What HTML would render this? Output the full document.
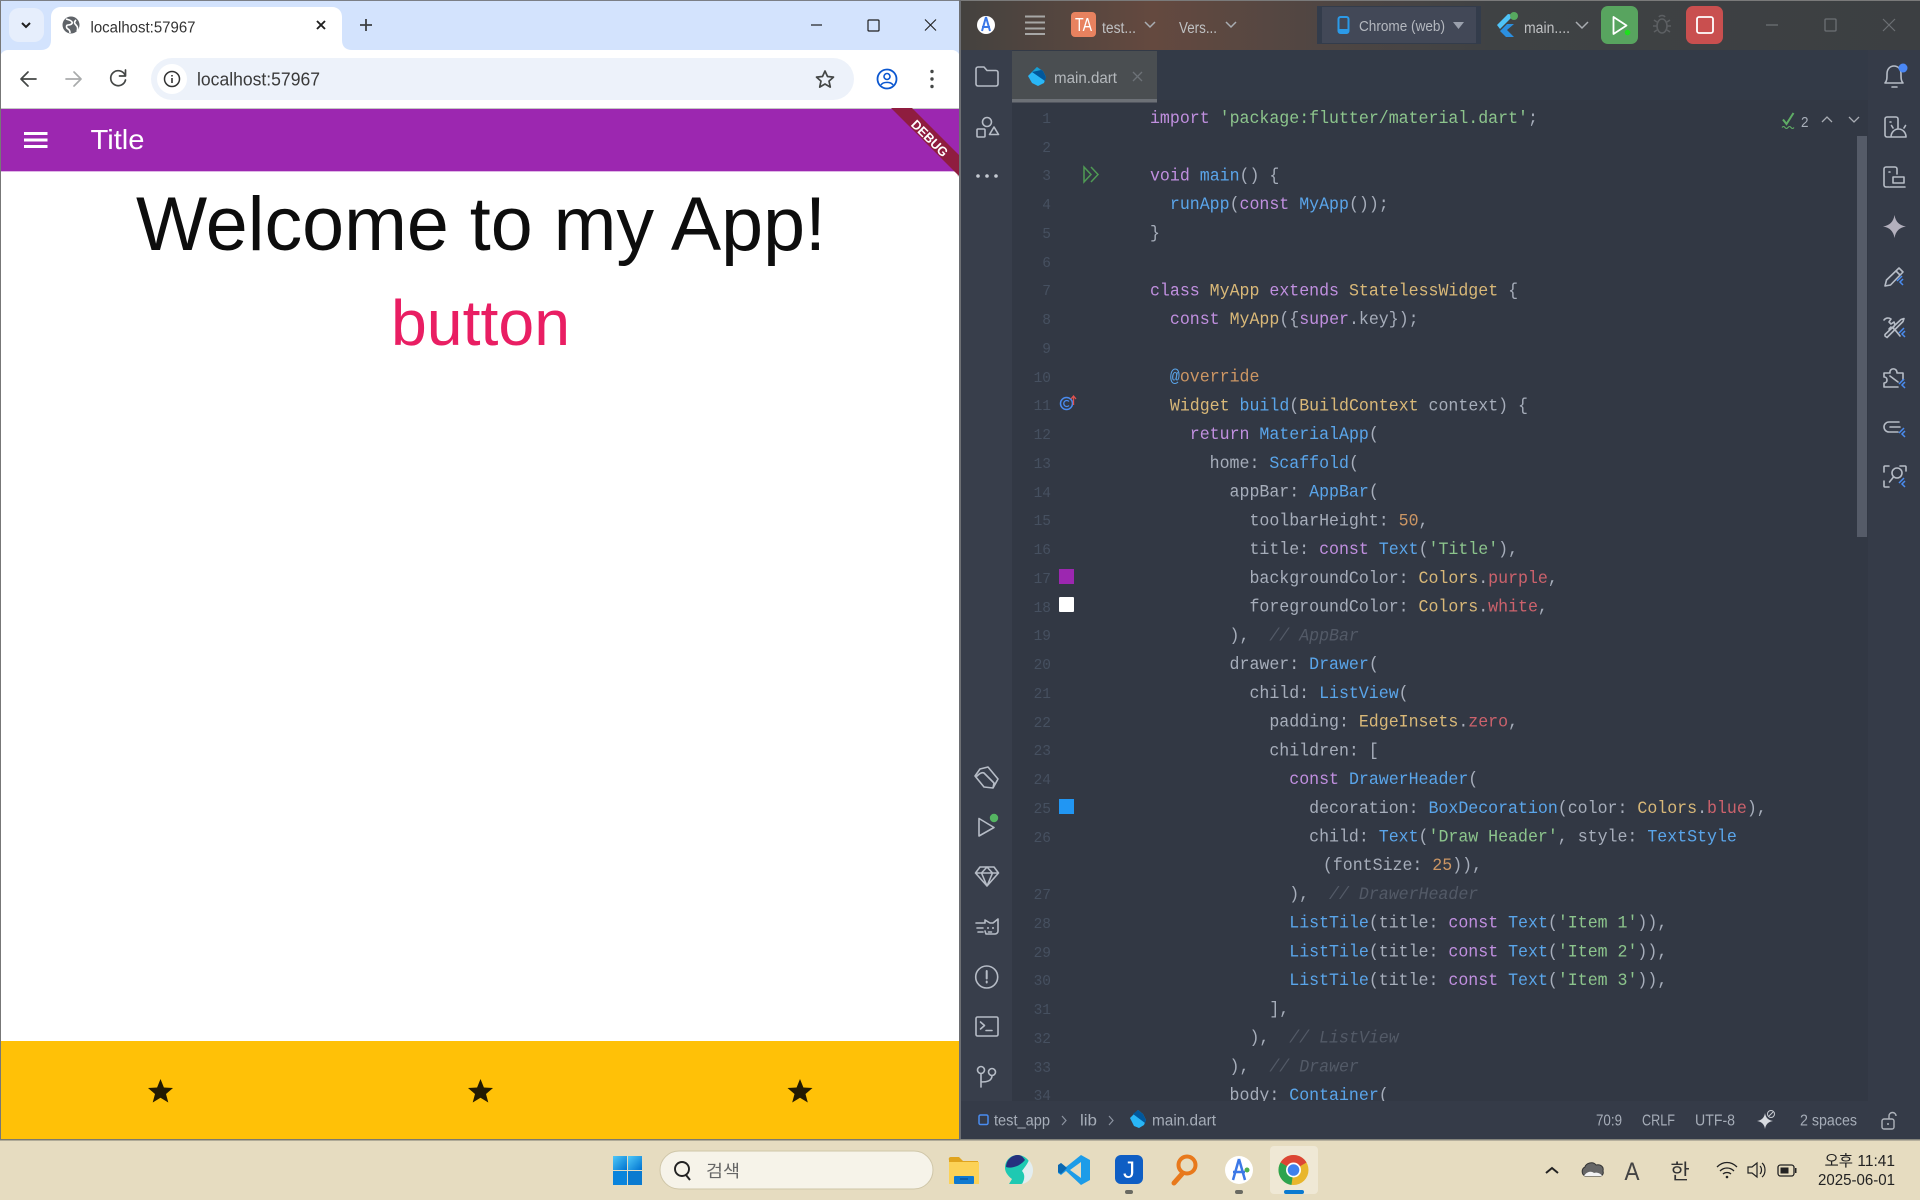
<!DOCTYPE html>
<html><head><meta charset="utf-8"><title>Screen</title>
<style>
html,body{margin:0;padding:0;background:#333a47;width:1920px;height:1200px;overflow:hidden}
svg{display:block;position:absolute;left:0;top:0}
text{font-family:"Liberation Sans","Noto Sans CJK KR",sans-serif;white-space:pre}
.code text{font-family:"Liberation Mono",monospace;font-size:17.47px;fill:#a6adba}
.k{fill:#c08fdf}.f{fill:#5aa5ea}.s{fill:#8cc48c}.y{fill:#d9b878}.r{fill:#cc626c}.n{fill:#cc9664}.c{fill:#535a67;font-style:italic}
.ln text{font-family:"Liberation Mono",monospace;font-size:14.5px;fill:#465060;text-anchor:end}
.ic{fill:none;stroke:#b6bcc6;stroke-width:1.6;stroke-linecap:round;stroke-linejoin:round}
.st{font-size:15.5px;fill:#a6adb8}
.tb{font-size:15.5px;fill:#bfc1c3}
.ch{fill:none;stroke:#a9adb2;stroke-width:1.5}
.bc{fill:none;stroke:#444746;stroke-width:1.7;stroke-linecap:round;stroke-linejoin:round}
.a{fill:none;stroke:#4a8cf0;stroke-width:1.5}
</style></head><body>
<svg width="1920" height="1200" viewBox="0 0 1920 1200" xmlns="http://www.w3.org/2000/svg">
<defs>
<linearGradient id="tg" x1="0" x2="1" y1="0" y2="0"><stop offset="0" stop-color="#44423f"/><stop offset=".2" stop-color="#64493f"/><stop offset=".38" stop-color="#4f4643"/><stop offset=".55" stop-color="#3f4244"/><stop offset="1" stop-color="#3c3f42"/></linearGradient>
<linearGradient id="wg" x1="0" x2="1" y1="0" y2="1"><stop offset="0" stop-color="#4fc8f8"/><stop offset="1" stop-color="#0073d0"/></linearGradient>
<clipPath id="cc"><rect x="1012" y="100" width="856" height="1001.5"/></clipPath>
</defs>

<!-- Taskbar -->
<rect x="0" y="1140" width="1920" height="60" fill="#e6dcc0"/>

<!-- Browser -->
<rect x="0" y="0" width="960" height="1140" fill="#fff"/>
<rect x="0" y="0" width="960" height="50" fill="#d3e3fd"/>
<rect x="9" y="8" width="35" height="34" rx="10" fill="#e6eefc"/>
<path d="M22 23l4 4 4-4" fill="none" stroke="#1f1f1f" stroke-width="2"/>
<path d="M41 50c6 0 10-3 10-10V17c0-6 4-10 10-10h271c6 0 10 4 10 10v23c0 7 4 10 10 10z" fill="#fff"/>
<circle cx="71" cy="25" r="8.5" fill="#5f6368"/>
<path d="M66 19c3 1 5 1 6 3s-2 3-4 3-2 3 0 4 2 3 2 4M76 20c-2 2-2 3 0 5s2 4 1 6" fill="none" stroke="#fff" stroke-width="1.6"/>
<text x="90.5" y="32.500" font-size="15.5" fill="#333" textLength="105" lengthAdjust="spacingAndGlyphs">localhost:57967</text>
<path d="M317 21l8 8M325 21l-8 8" stroke="#1f1f1f" stroke-width="1.9"/>
<path d="M366 19v12M360 25h12" stroke="#3d4043" stroke-width="1.8"/>
<path d="M811 25h11" stroke="#1f1f1f" stroke-width="1.2"/>
<rect x="868" y="20" width="11" height="11" rx="1" fill="none" stroke="#1f1f1f" stroke-width="1.2"/>
<path d="M925 19.500l11 11M936 19.500l-11 11" stroke="#1f1f1f" stroke-width="1.1"/>
<rect x="0" y="50" width="960" height="58" fill="#fff"/>
<path d="M0 50h8a8 8 0 0 0-8 8z" fill="#d3e3fd"/><path d="M960 50h-8a8 8 0 0 1 8 8z" fill="#d3e3fd"/>
<path d="M36 79H22M28 72l-7 7 7 7" class="bc"/>
<path d="M81 79H66M74 72l7 7-7 7" class="bc" style="stroke:#a9abac"/>
<path d="M125 75a7.500 7.500 0 1 0 .5 5M125.500 70v6h-6" class="bc"/>
<rect x="151" y="58" width="703" height="42" rx="21" fill="#edf2fa"/>
<circle cx="172" cy="79" r="15" fill="#fff"/>
<circle cx="172" cy="79" r="7.500" fill="none" stroke="#333" stroke-width="1.500"/><path d="M172 78v5M172 75v1.500" stroke="#333" stroke-width="1.600"/>
<text x="197" y="85.500" font-size="18" fill="#3a3a3a" textLength="123" lengthAdjust="spacingAndGlyphs">localhost:57967</text>
<path d="M825 71l2.500 5.500 6 .6-4.500 4 1.300 6-5.300-3.100-5.300 3.100 1.300-6-4.500-4 6-.6z" fill="none" stroke="#444746" stroke-width="1.700" stroke-linejoin="round"/>
<circle cx="887" cy="79" r="9.500" fill="none" stroke="#0b57d0" stroke-width="1.800"/><circle cx="887" cy="76.500" r="3" fill="none" stroke="#0b57d0" stroke-width="1.600"/><path d="M881 85c2-3.500 10-3.500 12 0" fill="none" stroke="#0b57d0" stroke-width="1.600"/>
<circle cx="932" cy="71.500" r="1.700" fill="#444746"/><circle cx="932" cy="79" r="1.700" fill="#444746"/><circle cx="932" cy="86.500" r="1.700" fill="#444746"/>
<rect x="0" y="108" width="960" height="1" fill="#c4c7c5"/>

<!-- App bar -->
<rect x="1" y="109" width="959" height="62" fill="#9c27b0"/>
<rect x="1" y="171" width="959" height="1" fill="#dfb6e6"/>
<path d="M24 133.500h23.500M24 140h23.500M24 146.500h23.500" stroke="#fff" stroke-width="3"/>
<text x="90.500" y="149" font-size="27.500" fill="#fff" textLength="54" lengthAdjust="spacingAndGlyphs">Title</text>
<path d="M960 156v22l-3-2z" fill="#d0d0d0" opacity=".6"/>
<polygon points="891,108 912,108 960,156 960,177" fill="#8f1d3f"/>
<text transform="translate(930 138) rotate(45)" text-anchor="middle" y="5" font-size="13" font-weight="bold" fill="#fff" textLength="46" lengthAdjust="spacingAndGlyphs">DEBUG</text>

<text x="136" y="250" font-size="76" fill="#0d0d0d" textLength="690" lengthAdjust="spacingAndGlyphs">Welcome to my App!</text>
<text x="391" y="345" font-size="64" fill="#e91e63" textLength="179" lengthAdjust="spacingAndGlyphs">button</text>

<rect x="1" y="1041" width="959" height="98" fill="#ffc107"/>
<g fill="#221a02">
<polygon points="160.500,1079 163.900,1087.500 173,1088 166,1094 168.300,1102.500 160.500,1097.700 152.700,1102.500 155,1094 148,1088 157.100,1087.500"/>
<polygon points="480.500,1079 483.900,1087.500 493,1088 486,1094 488.300,1102.500 480.500,1097.700 472.700,1102.500 475,1094 468,1088 477.100,1087.500"/>
<polygon points="800,1079 803.400,1087.500 812.500,1088 805.500,1094 807.800,1102.500 800,1097.700 792.200,1102.500 794.500,1094 787.500,1088 796.600,1087.500"/>
</g>
<rect x="0" y="0" width="1" height="1140" fill="#777"/>
<rect x="0" y="0" width="960" height="1" fill="#7b7f86"/>
<rect x="0" y="1139" width="960" height="1.500" fill="#7b7a70"/>

<!-- IDE -->
<rect x="960" y="0" width="960" height="1140" fill="#333a47"/>
<rect x="959" y="0" width="2" height="1140" fill="#6d6f73"/>
<rect x="961" y="0" width="959" height="50" fill="url(#tg)"/>
<rect x="961" y="0" width="959" height="1" fill="#7a7a7a"/>
<rect x="961" y="50" width="51" height="1051" fill="#383e4b"/>
<rect x="1012" y="100" width="856" height="1001" fill="#323844"/>
<rect x="1868" y="50" width="52" height="1051" fill="#353b48"/>
<rect x="1012" y="51" width="145" height="48" fill="#4a4e51"/>
<rect x="1012" y="99" width="145" height="3.500" fill="#6d7177"/>

<!-- Title bar -->
<circle cx="986" cy="25" r="9" fill="#fff"/>
<path d="M986 17l-4 14M986 17l4 14M982 27h8" stroke="#3b78e7" stroke-width="2" fill="none"/>
<path d="M1025 16.500h20M1025 22.500h20M1025 28.500h20M1025 34h20" stroke="#a7a7a6" stroke-width="2"/>
<rect x="1071" y="12" width="25" height="25" rx="4" fill="#e8825f"/>
<text x="1083.500" y="31" text-anchor="middle" font-size="18" fill="#fff" textLength="17" lengthAdjust="spacingAndGlyphs">TA</text>
<text x="1102" y="33" class="tb" textLength="34" lengthAdjust="spacingAndGlyphs">test...</text>
<path d="M1145 22l5 5 5-5" class="ch"/>
<text x="1179" y="33" class="tb" textLength="38" lengthAdjust="spacingAndGlyphs">Vers...</text>
<path d="M1226 22l5 5 5-5" class="ch"/>
<rect x="1317" y="6" width="164" height="38" fill="#333c4b"/>
<rect x="1322" y="7" width="154" height="36" fill="#424857"/>
<rect x="1338.500" y="17" width="10" height="16" rx="2" fill="none" stroke="#2b9ae8" stroke-width="2"/><rect x="1339" y="29" width="9" height="3.500" fill="#2b9ae8"/>
<text x="1359" y="31" font-size="14.500" fill="#b4b8bf" textLength="86" lengthAdjust="spacingAndGlyphs">Chrome (web)</text>
<polygon points="1453,22 1464,22 1458.500,29" fill="#9aa0ac"/>
<polygon points="1508,14 1497,25 1500,29 1514,15" fill="#4fc3f7"/><polygon points="1507,24 1500,31 1506,37 1514,37 1507,30 1514,24" fill="#2b8fe0"/>
<circle cx="1514" cy="16" r="4" fill="#57a95f"/>
<text x="1524" y="33" class="tb" textLength="46" lengthAdjust="spacingAndGlyphs">main....</text>
<path d="M1576 22l6 6 6-6" class="ch"/>
<rect x="1601" y="6" width="37" height="38" rx="7" fill="#58a45f"/>
<path d="M1613.500 17v17l13-8.500z" fill="none" stroke="#fff" stroke-width="1.800" stroke-linejoin="round"/><circle cx="1627.500" cy="32.500" r="2.800" fill="#1ee01e"/>
<g fill="none" stroke="#5c5f62" stroke-width="1.600"><ellipse cx="1662" cy="26" rx="5" ry="7"/><path d="M1654 20l3 2M1670 20l-3 2M1653 26h4M1667 26h4M1654 32l3-2M1670 32l-3-2M1659 17c1-2 5-2 6 0"/></g>
<rect x="1686" y="6" width="37" height="38" rx="7" fill="#c94f4f"/>
<rect x="1697" y="17" width="16" height="16" rx="2" fill="none" stroke="#fff" stroke-width="1.800"/>
<path d="M1766 25h12" stroke="#6c7074" stroke-width="1.300"/>
<rect x="1825" y="19" width="11" height="12" rx="1" fill="none" stroke="#6c7074" stroke-width="1.300"/>
<path d="M1883 19l12 12M1895 19l-12 12" stroke="#6c7074" stroke-width="1.200"/>

<!-- Tab -->
<path d="M1037 67l6 4 3 6-2 6-6 3-6-3-4-7z" fill="#29b6f6"/><path d="M1032 72l5-5 6 4 3 6-1 4z" fill="#01579b"/><path d="M1032 72l5-5 4 3z" fill="#1a9fd0"/>
<text x="1054" y="83" font-size="16" fill="#b4b8bc" textLength="63" lengthAdjust="spacingAndGlyphs">main.dart</text>
<path d="M1133 72l9 9M1142 72l-9 9" stroke="#6d7278" stroke-width="1.300"/>

<!-- Line numbers -->
<g class="ln" transform="translate(0 -1)">
<text x="1051" y="124">1</text><text x="1051" y="153">2</text><text x="1051" y="181">3</text><text x="1051" y="210">4</text><text x="1051" y="239">5</text><text x="1051" y="268">6</text><text x="1051" y="296">7</text><text x="1051" y="325">8</text><text x="1051" y="354">9</text><text x="1051" y="383">10</text><text x="1051" y="411">11</text><text x="1051" y="440">12</text><text x="1051" y="469">13</text><text x="1051" y="498">14</text><text x="1051" y="526">15</text><text x="1051" y="555">16</text><text x="1051" y="584">17</text><text x="1051" y="613">18</text><text x="1051" y="641">19</text><text x="1051" y="670">20</text><text x="1051" y="699">21</text><text x="1051" y="728">22</text><text x="1051" y="756">23</text><text x="1051" y="785">24</text><text x="1051" y="814">25</text><text x="1051" y="843">26</text><text x="1051" y="900">27</text><text x="1051" y="929">28</text><text x="1051" y="958">29</text><text x="1051" y="986">30</text><text x="1051" y="1015">31</text><text x="1051" y="1044">32</text><text x="1051" y="1073">33</text><text x="1051" y="1101">34</text>
</g>

<!-- Gutter icons -->
<path d="M1084 167l7 7.500-7 7.500zM1091 167l7 7.500-7 7.500" fill="none" stroke="#4f9a54" stroke-width="1.500"/>
<circle cx="1066.500" cy="403.500" r="6" fill="none" stroke="#4a8cf0" stroke-width="1.500"/><path d="M1069 401.500a3 3 0 1 0 0 4" fill="none" stroke="#4a8cf0" stroke-width="1.300"/>
<path d="M1073.500 405v-9M1071 399l2.500-3 2.500 3" fill="none" stroke="#e0524f" stroke-width="1.300"/>
<rect x="1059" y="569" width="15" height="15" fill="#9c27b0"/>
<rect x="1059" y="597" width="15" height="15" rx="1" fill="#fff"/>
<rect x="1059" y="799" width="15" height="15" fill="#2196f3"/>

<!-- Code -->
<g class="code" clip-path="url(#cc)"><g transform="translate(1150 -1) scale(.95 1) translate(-1150 0)">
<text x="1150" y="124"><tspan class="k">import</tspan> <tspan class="s">'package:flutter/material.dart'</tspan>;</text>
<text x="1150" y="181.500"><tspan class="k">void</tspan> <tspan class="f">main</tspan>() {</text>
<text x="1150" y="210"><tspan class="f">  runApp</tspan>(<tspan class="k">const</tspan> <tspan class="f">MyApp</tspan>());</text>
<text x="1150" y="239">}</text>
<text x="1150" y="296.500"><tspan class="k">class</tspan> <tspan class="y">MyApp</tspan> <tspan class="k">extends</tspan> <tspan class="y">StatelessWidget</tspan> {</text>
<text x="1150" y="325">  <tspan class="k">const</tspan> <tspan class="y">MyApp</tspan>({<tspan class="k">super</tspan>.key});</text>
<text x="1150" y="382.700">  <tspan class="f">@</tspan><tspan class="n">override</tspan></text>
<text x="1150" y="411.400">  <tspan class="y">Widget</tspan> <tspan class="f">build</tspan>(<tspan class="y">BuildContext</tspan> context) {</text>
<text x="1150" y="440.100">    <tspan class="k">return</tspan> <tspan class="f">MaterialApp</tspan>(</text>
<text x="1150" y="468.900">      home: <tspan class="f">Scaffold</tspan>(</text>
<text x="1150" y="497.600">        appBar: <tspan class="f">AppBar</tspan>(</text>
<text x="1150" y="526.400">          toolbarHeight: <tspan class="n">50</tspan>,</text>
<text x="1150" y="555.100">          title: <tspan class="k">const</tspan> <tspan class="f">Text</tspan>(<tspan class="s">'Title'</tspan>),</text>
<text x="1150" y="583.800">          backgroundColor: <tspan class="y">Colors</tspan>.<tspan class="r">purple</tspan>,</text>
<text x="1150" y="612.600">          foregroundColor: <tspan class="y">Colors</tspan>.<tspan class="r">white</tspan>,</text>
<text x="1150" y="641.300">        ),  <tspan class="c">// AppBar</tspan></text>
<text x="1150" y="670.100">        drawer: <tspan class="f">Drawer</tspan>(</text>
<text x="1150" y="698.800">          child: <tspan class="f">ListView</tspan>(</text>
<text x="1150" y="727.500">            padding: <tspan class="y">EdgeInsets</tspan>.<tspan class="r">zero</tspan>,</text>
<text x="1150" y="756.300">            children: [</text>
<text x="1150" y="785">              <tspan class="k">const</tspan> <tspan class="f">DrawerHeader</tspan>(</text>
<text x="1150" y="813.800">                decoration: <tspan class="f">BoxDecoration</tspan>(color: <tspan class="y">Colors</tspan>.<tspan class="r">blue</tspan>),</text>
<text x="1150" y="842.500">                child: <tspan class="f">Text</tspan>(<tspan class="s">'Draw Header'</tspan>, style: <tspan class="f">TextStyle</tspan></text>
<text x="1332" y="871.200">(fontSize: <tspan class="n">25</tspan>)),</text>
<text x="1150" y="900">              ),  <tspan class="c">// DrawerHeader</tspan></text>
<text x="1150" y="928.700">              <tspan class="f">ListTile</tspan>(title: <tspan class="k">const</tspan> <tspan class="f">Text</tspan>(<tspan class="s">'Item 1'</tspan>)),</text>
<text x="1150" y="957.500">              <tspan class="f">ListTile</tspan>(title: <tspan class="k">const</tspan> <tspan class="f">Text</tspan>(<tspan class="s">'Item 2'</tspan>)),</text>
<text x="1150" y="986.200">              <tspan class="f">ListTile</tspan>(title: <tspan class="k">const</tspan> <tspan class="f">Text</tspan>(<tspan class="s">'Item 3'</tspan>)),</text>
<text x="1150" y="1014.900">            ],</text>
<text x="1150" y="1043.700">          ),  <tspan class="c">// ListView</tspan></text>
<text x="1150" y="1072.400">        ),  <tspan class="c">// Drawer</tspan></text>
<text x="1150" y="1101.200">        body: <tspan class="f">Container</tspan>(</text>
</g></g>

<!-- Inspection widget / scrollbar -->
<path d="M1783 119.500l3.500 4.500 7-11" fill="none" stroke="#5fad65" stroke-width="2"/><path d="M1782 127.500q1.500-2 3 0t3 0 3 0 3 0" fill="none" stroke="#5fad65" stroke-width="1.100"/>
<text x="1801" y="127" font-size="15" fill="#a9b0bb" textLength="7.500" lengthAdjust="spacingAndGlyphs">2</text>
<path d="M1822 122l5-5 5 5" fill="none" stroke="#a9adb4" stroke-width="1.300"/><path d="M1849 117l5 5 5-5" fill="none" stroke="#a9adb4" stroke-width="1.300"/>
<rect x="1857" y="136" width="10" height="401" fill="#555b68"/>

<!-- Left toolbar -->
<g class="ic">
<path d="M976 69a2 2 0 0 1 2-2h6l3 3.500h9a2 2 0 0 1 2 2V84a2 2 0 0 1-2 2h-18a2 2 0 0 1-2-2z"/>
<circle cx="987" cy="122" r="4.500"/><rect x="977" y="129" width="8" height="8" rx="1"/><path d="M994 127l4.500 7.500h-9z"/>
<path d="M980 769l8-2 10 12-5 9-9-1-9-11zM977 776c2-2 5-4 7-3l10 10-1 5"/>
<path d="M979 818.500v17.500l15-8.500z"/>
<path d="M975.500 873l4.500-6h14l4.500 6-11.500 13zM975.500 873h23M981.500 873l5.500 13 5.500-13M981.500 873l5.500-6 5.500 6"/>
<path d="M985 920l5 3h3l5-4v12a3 3 0 0 1-3 3h-9l-1-3M985 920v3M976 923h8M977 928h6M978 932h5M988.500 932h3"/>
<circle cx="986.700" cy="977" r="11"/>
<rect x="976" y="1017" width="22" height="19" rx="1.500"/><path d="M980.500 1022l4 3.500-4 3.500M986 1030.500h6"/>
<circle cx="981" cy="1070" r="3.500"/><circle cx="992" cy="1072" r="3.500"/><path d="M981 1074v13M981 1082c6 0 11-1 11-6.500"/>
</g>
<circle cx="978" cy="176" r="1.800" fill="#c5cad2"/><circle cx="987" cy="176" r="1.800" fill="#c5cad2"/><circle cx="996" cy="176" r="1.800" fill="#c5cad2"/>
<circle cx="994" cy="818" r="4.200" fill="#55b562"/>
<circle cx="988" cy="928" r="1" fill="#b6bcc6"/><circle cx="993" cy="928" r="1" fill="#b6bcc6"/>
<path d="M986.700 971v7.500M986.700 981.500v1" stroke="#b6bcc6" stroke-width="2" stroke-linecap="round"/>

<!-- Right toolbar -->
<g class="ic">
<path d="M1885 83c2-2 2-5 2-9 0-5 3-8 7-8s7 3 7 8c0 4 0 7 2 9zM1892 87h5"/>
<path d="M1896 117h-9a2 2 0 0 0-2 2v16a2 2 0 0 0 2 2h3M1898 128v-9a2 2 0 0 0-2-2M1891 137a7.500 8 0 0 1 15 0zM1893 128l-1.500-2.500M1904 128l1.500-2.500M1890 122h1"/>
<path d="M1895 167h-9a2 2 0 0 0-2 2v16a2 2 0 0 0 2 2h3M1897 174v-5a2 2 0 0 0-2-2M1893 177h11v6h-11zM1890 187h15M1889 172h1"/>
<path d="M1885 286l1.500-6 12.500-12 4 4-12.500 13zM1896 271l4 4"/>
<path d="M1885 336l2 1.500 16-16 1-3-3 1-16 15zM1884 320a5 5 0 0 1 7-1l-2 3 2 2 3-2a5 5 0 0 1-1 6l3 3 4 5M1891 327l-2 2"/>
<path d="M1884 373h6c-1-5 7-6 7 0h6v7M1884 373v4c4 0 4 6 0 6v4h14M1890 376l8 6"/>
<path d="M1899 422h-10a5 5 0 0 0 0 10h9M1890 427h10"/>
<path d="M1884 472v-5a1 1 0 0 1 1-1h4M1900 466h5a1 1 0 0 1 1 1v4M1884 481v5a1 1 0 0 0 1 1h4"/>
<circle cx="1897" cy="473" r="5"/><path d="M1893.500 477l-4 5"/>
</g>
<path d="M1894.500 215q1.500 10 11.500 11.500-10 1.500-11.500 11.500-1.500-10-11.500-11.500 10-1.500 11.500-11.500z" fill="#b3b0bd"/>
<circle cx="1903" cy="68" r="4.500" fill="#4a87f5"/>
<path d="M1897 281l5-5M1903 279l-3 3 3 3" class="a"/>
<path d="M1899 333l5-5M1905 331l-3 3 3 3" class="a"/>
<path d="M1899 384l5-5M1905 382l-3 3 3 3" class="a"/>
<path d="M1899 433l5-5M1905 431l-3 3 3 3" class="a"/>
<path d="M1899 483l5-5M1905 481l-3 3 3 3" class="a"/>

<!-- Status bar -->
<rect x="961" y="1101" width="959" height="38" fill="#353b48"/>
<rect x="979" y="1115" width="9" height="9.500" rx="1.500" fill="none" stroke="#4a8cf0" stroke-width="1.500"/>
<text x="994" y="1125.500" class="st" textLength="56" lengthAdjust="spacingAndGlyphs">test_app</text>
<path d="M1062 1116l4 4.500-4 4.500" fill="none" stroke="#8c93a0" stroke-width="1.200"/>
<text x="1080" y="1125.500" class="st" textLength="17" lengthAdjust="spacingAndGlyphs">lib</text>
<path d="M1109 1116l4 4.500-4 4.500" fill="none" stroke="#8c93a0" stroke-width="1.200"/>
<path d="M1138 1110l5 4 3 6-2 5-5 3-5-2-4-8z" fill="#29b6f6"/><path d="M1133 1114l5-4 5 4 3 6-1 3z" fill="#01579b"/>
<text x="1152" y="1125.500" class="st" textLength="64" lengthAdjust="spacingAndGlyphs">main.dart</text>
<text x="1596" y="1125.500" class="st" textLength="26" lengthAdjust="spacingAndGlyphs">70:9</text>
<text x="1642" y="1125.500" class="st" textLength="33" lengthAdjust="spacingAndGlyphs">CRLF</text>
<text x="1695" y="1125.500" class="st" textLength="40" lengthAdjust="spacingAndGlyphs">UTF-8</text>
<path d="M1765 1113q1 7 8 8-7 1-8 8-1-7-8-8 7-1 8-8z" fill="#d8dbe0"/><circle cx="1771" cy="1114" r="3.500" fill="none" stroke="#c8ccd2" stroke-width="1"/><path d="M1769 1116l4-4" stroke="#c8ccd2" stroke-width="1"/>
<text x="1800" y="1125.500" class="st" textLength="57" lengthAdjust="spacingAndGlyphs">2 spaces</text>
<rect x="1882" y="1119" width="12" height="10" rx="2" fill="none" stroke="#aeb3bb" stroke-width="1.400"/><path d="M1889 1119v-3a3.500 3.500 0 0 1 7 0" fill="none" stroke="#aeb3bb" stroke-width="1.400"/><circle cx="1888" cy="1124" r="1" fill="#aeb3bb"/>
<rect x="960" y="1139" width="960" height="1.500" fill="#85857d"/>

<!-- Taskbar items -->
<rect x="613" y="1156" width="14" height="14" fill="url(#wg)"/><rect x="628" y="1156" width="14" height="14" fill="url(#wg)"/><rect x="613" y="1171" width="14" height="14" fill="#0a84dc"/><rect x="628" y="1171" width="14" height="14" fill="#0a7ad0"/>
<rect x="660" y="1151" width="273" height="38" rx="19" fill="#f6f3e9" stroke="#cfc6a8"/>
<circle cx="682" cy="1169" r="7" fill="none" stroke="#222" stroke-width="1.900"/><path d="M686 1175l4 5" stroke="#222" stroke-width="2"/>
<text x="706" y="1177" font-size="17" fill="#666" textLength="34" lengthAdjust="spacingAndGlyphs">검색</text>
<!-- folder -->
<path d="M949 1160a2 2 0 0 1 2-3h8l4 4h15v23h-29z" fill="#e0a41e"/><rect x="949" y="1162" width="30" height="22" fill="#fcd257"/><rect x="954" y="1176" width="20" height="8" rx="1" fill="#0f79d0"/><path d="M960 1179h8" stroke="#0a4f92" stroke-width="1.300"/>
<!-- whale -->
<path d="M1005 1168c0-8 6-13 13-13s14 7 14 15c0 9-7 14-12 14h-11l3-5c-4-3-7-7-7-11z" fill="#1ec9b2"/><path d="M1018 1155c-6 0-12 5-12 12 6 2 14-1 19-7-2-3-4-5-7-5z" fill="#26307e"/><path d="M1022 1184c6-1 11-6 11-14 0-4-2-7-4-10-2 5-5 8-7 11 3 3 3 8 0 13z" fill="#e3eef1"/>
<!-- vscode -->
<path d="M1081 1155l9 5v20l-9 5-15-14-5 4-3-2v-7l3-3 5 4z" fill="#1d9ce8"/><path d="M1081 1162v16l-11-8z" fill="#e6dcc0"/><path d="M1061 1163l6 5-6 6-3-2v-7z" fill="#0a67b0"/>
<!-- J -->
<rect x="1115" y="1155" width="28" height="29" rx="6" fill="#0f5ec4"/>
<text x="1129" y="1178" text-anchor="middle" font-size="24" fill="#fff">J</text>
<rect x="1125" y="1190" width="8" height="4" rx="2" fill="#6a6a62"/>
<!-- magnifier -->
<circle cx="1187" cy="1165" r="8.500" fill="none" stroke="#e8791c" stroke-width="4"/><path d="M1182 1174l-8 9" stroke="#e8791c" stroke-width="5" stroke-linecap="round"/>
<!-- android studio -->
<circle cx="1239" cy="1170" r="14" fill="#fff"/><path d="M1239 1159l-6 21M1239 1159l6 21M1233 1172h12" stroke="#3b78e7" stroke-width="2.500" fill="none"/><circle cx="1247" cy="1170" r="2.500" fill="#4caf50"/>
<rect x="1235" y="1190" width="8" height="4" rx="2" fill="#6a6a62"/>
<!-- chrome -->
<rect x="1270" y="1146" width="48" height="48" rx="4" fill="#efe8d5"/>
<g transform="translate(1293.500 1170)"><circle r="15" fill="#e8b62c"/><path d="M0 0L-13 -7.500A15 15 0 0 1 13 -7.500z" fill="#dc4535"/><path d="M0 0L-13 -7.500A15 15 0 0 0 -2 14.900z" fill="#2ea44f"/><circle r="7.500" fill="#fff"/><circle r="5.800" fill="#3f80ef"/></g>
<rect x="1284" y="1190" width="20" height="4" rx="2" fill="#0b7ad0"/>
<!-- Tray -->
<path d="M1546 1173l6-5 6 5" fill="none" stroke="#222" stroke-width="2"/>
<path d="M1585 1176a5 5 0 0 1 0-9c1-4 8-6 11-2 5-1 8 2 7 6 1 3-1 5-3 5z" fill="#666" stroke="#333" stroke-width="1"/><path d="M1584 1176c3-5 8-5 10-3 2-1 7 0 8 3z" fill="#f2f2f2"/>
<text x="1632" y="1180" text-anchor="middle" font-size="25" fill="#444" textLength="15" lengthAdjust="spacingAndGlyphs">A</text>
<text x="1680" y="1179" text-anchor="middle" font-size="21" fill="#333">한</text>
<path d="M1717 1167c6-6 14-6 20 0M1720 1171c4-4 10-4 14 0M1723 1174c2-2 6-2 8 0" fill="none" stroke="#222" stroke-width="1.300"/><circle cx="1727" cy="1177" r="1.300" fill="#222"/>
<path d="M1748 1167h4l5-4v14l-5-4h-4zM1760 1166c2 2 2 6 0 8M1762 1163c4 3 4 11 0 14" fill="none" stroke="#222" stroke-width="1.200"/>
<rect x="1778" y="1165" width="16" height="11" rx="2.500" fill="none" stroke="#222" stroke-width="1.300"/><rect x="1780.500" y="1167.500" width="8" height="6" fill="#222"/><rect x="1795" y="1168" width="1.500" height="5" fill="#222"/>
<text x="1895" y="1166" text-anchor="end" font-size="15.500" fill="#222">오후 11:41</text>
<text x="1895" y="1185" text-anchor="end" font-size="15.500" fill="#222" textLength="77" lengthAdjust="spacingAndGlyphs">2025-06-01</text>
</svg>
</body></html>
